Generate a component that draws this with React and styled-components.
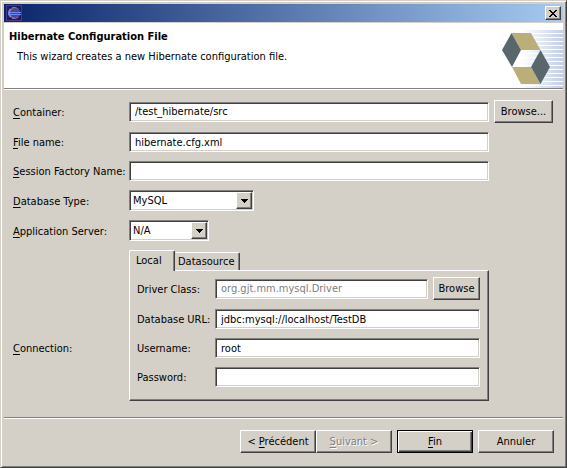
import React, { useState } from 'react';
import styled, { createGlobalStyle, css } from 'styled-components';

const face = '#d4d0c8';
const shade = '#808080';
const dark = '#404040';

const GlobalStyle = createGlobalStyle`
  *, *::before, *::after { box-sizing: border-box; }
  body { margin: 0; background: ${face}; }
  body, button, input, select {
    font-family: "DejaVu Sans Condensed", "DejaVu Sans", sans-serif;
    font-size: 11px;
    line-height: 14px;
    color: #000;
  }
`;

const raised = css`
  border: 1px solid;
  border-color: #fff ${dark} ${dark} #fff;
  box-shadow: inset -1px -1px 0 ${shade};
`;

const sunken = css`
  border: 1px solid;
  border-color: ${shade} #fff #fff ${shade};
  box-shadow: inset 1px 1px 0 ${dark}, inset -1px -1px 0 ${face};
`;

const Window = styled.div`
  display: flex;
  flex-direction: column;
  min-height: 100vh;
  padding: 3px;
  background: ${face};
  border: 1px solid;
  border-color: ${face} ${dark} ${dark} ${face};
  box-shadow: inset 1px 1px 0 #fff, inset -1px -1px 0 ${shade};
`;

const TitleBar = styled.div`
  display: flex;
  align-items: center;
  justify-content: space-between;
  height: 18px;
  padding: 0 2px;
  background: linear-gradient(to right, #0a246a, #a6caf0);
`;

const CloseButton = styled.button`
  ${raised}
  display: grid;
  place-items: center;
  width: 16px;
  height: 14px;
  padding: 0;
  background: ${face};
`;

const Header = styled.header`
  display: flex;
  justify-content: space-between;
  height: 67px;
  margin-top: 1px;
  background: #fff;
  border-bottom: 1px solid #fff;
  box-shadow: inset 0 -1px 0 ${shade};
`;

const HeaderText = styled.div`
  padding: 7px 5px;
`;

const Title = styled.h1`
  margin: 0 0 6px;
  font-size: 11px;
  line-height: 14px;
  font-weight: bold;
`;

const Subtitle = styled.p`
  margin: 0;
  padding-left: 8px;
`;

const Form = styled.form`
  display: flex;
  flex: 1;
  flex-direction: column;
`;

const Fields = styled.div`
  display: grid;
  grid-template-columns: 111px 1fr 59px;
  gap: 9px 5px;
  align-items: center;
  padding: 10px 10px 16px 9px;
`;

const Label = styled.label`
  grid-column: 1;
  padding-top: 2px;
  white-space: nowrap;
`;

const GroupLabel = styled.span`
  grid-column: 1;
  padding-top: 46px;
`;

const Mnemonic = styled.span`
  text-decoration: underline;
  text-underline-offset: 2px;
`;

const TextBox = styled.input`
  ${sunken}
  grid-column: ${(p) => (p.$wide ? 'span 2' : 'auto')};
  width: 100%;
  min-width: 0;
  height: 20px;
  padding: 0 5px;
  background: #fff;
  outline: none;
  &:disabled { color: ${shade}; }
`;

const SelectBox = styled.div`
  ${sunken}
  display: grid;
  align-items: center;
  width: ${(p) => p.$width}px;
  height: 21px;
  padding: 1px;
  background: #fff;
`;

const NativeSelect = styled.select`
  grid-area: 1 / 1;
  width: 100%;
  padding: 0 2px;
  appearance: none;
  background: transparent;
  border: 0;
  outline: none;
`;

const Arrow = styled.span`
  ${raised}
  grid-area: 1 / 1;
  justify-self: end;
  display: grid;
  place-items: center;
  width: 16px;
  height: 17px;
  background: ${face};
  pointer-events: none;
`;

const TabGroup = styled.div`
  min-width: 0;
`;

const TabList = styled.div`
  display: flex;
  align-items: flex-end;
  height: 20px;
`;

const Tab = styled.button`
  height: ${(p) => (p.$active ? 21 : 18)}px;
  margin-bottom: ${(p) => (p.$active ? -1 : 0)}px;
  padding: 0 2px 0 ${(p) => (p.$active ? 6 : 2)}px;
  width: ${(p) => p.$width}px;
  text-align: left;
  background: ${face};
  border: 1px solid;
  border-color: #fff ${dark} transparent ${(p) => (p.$active ? '#fff' : face)};
  border-bottom: 0;
  border-radius: 2px 2px 0 0;
  box-shadow: inset -1px 0 0 ${shade};
`;

const Panel = styled.div`
  ${raised}
  display: grid;
  grid-template-columns: 73px 1fr 47px;
  gap: 9px 5px;
  align-items: center;
  padding: 6px 8px 13px 7px;
`;

const Footer = styled.footer`
  display: flex;
  justify-content: flex-end;
  gap: 5px;
  margin-top: auto;
  padding: 12px 9px 11px;
  border-top: 1px solid ${shade};
  box-shadow: inset 0 1px 0 #fff;
`;

const Pair = styled.div`
  display: flex;
`;

const Button = styled.button`
  ${raised}
  width: ${(p) => (p.$fill ? '100%' : '76px')};
  height: 23px;
  padding: 0;
  white-space: nowrap;
  background: ${face};
  &:disabled { color: ${shade}; text-shadow: 1px 1px 0 #fff; }
`;

const DefaultButton = styled(Button)`
  border-color: #000;
  box-shadow: inset 1px 1px 0 #fff, inset -1px -1px 0 ${dark}, inset -2px -2px 0 ${shade};
`;

function EclipseIcon() {
  return (
    <svg width="16" height="16" viewBox="0 0 16 16" aria-hidden="true">
      <rect width="16" height="16" fill="#4a3a8a" />
      <rect x="1" y="1" width="14" height="14" fill="#23185a" />
      <circle cx="8" cy="8" r="6" fill="#8f89c0" />
      <circle cx="9" cy="8" r="5" fill="#4c4494" />
      <path d="M2 7.500h13M2 9.500h13" stroke="#6f86ea" />
      <path d="M3 13h3M4 3h2" stroke="#120a30" />
    </svg>
  );
}

function CloseIcon() {
  return (
    <svg width="8" height="7" viewBox="0 0 8 7" shapeRendering="crispEdges" aria-hidden="true">
      <path d="M0 0h2v1h1v1h2v-1h1v-1h2v1h-1v1h-1v1h-1v1h1v1h1v1h1v1h-2v-1h-1v-1h-2v1h-1v1h-2v-1h1v-1h1v-1h1v-1h-1v-1h-1v-1h-1z" />
    </svg>
  );
}

function HibernateArt() {
  const stripes = Array.from({ length: 15 }, (_, i) => 7 + i * 4);
  return (
    <svg width="61" height="65" viewBox="0 0 61 65" aria-hidden="true">
      <defs>
        <linearGradient id="haze" gradientUnits="userSpaceOnUse" x1="20" y1="0" x2="61" y2="0">
          <stop offset="0" stopColor="#fff" />
          <stop offset="1" stopColor="#c3cee8" />
        </linearGradient>
      </defs>
      {stripes.map((y) => (
        <rect key={y} x="20" y={y} width="41" height="3" fill="url(#haze)" />
      ))}
      <path d="M9.500 10H29L38.500 27H19zM10 44H29L38.500 61H19z" fill="#bcae79" />
      <path d="M0 27L9.500 10L19 27L10 44zM38.500 27L48 44L38.500 61L29 44z" fill="#59666c" />
    </svg>
  );
}

function Combo({ id, width, value }) {
  return (
    <SelectBox $width={width}>
      <NativeSelect id={id} defaultValue={value}>
        <option>{value}</option>
      </NativeSelect>
      <Arrow>
        <svg width="7" height="4" viewBox="0 0 7 4" shapeRendering="crispEdges" aria-hidden="true">
          <path d="M0 0h7v1h-1v1h-1v1h-1v1h-1v-1h-1v-1h-1v-1h-1z" />
        </svg>
      </Arrow>
    </SelectBox>
  );
}

export default function App() {
  const [tab, setTab] = useState('local');
  return (
    <>
      <GlobalStyle />
      <Window>
        <TitleBar>
          <EclipseIcon />
          <CloseButton type="button" aria-label="Fermer"><CloseIcon /></CloseButton>
        </TitleBar>
        <Header>
          <HeaderText>
            <Title>Hibernate Configuration File</Title>
            <Subtitle>This wizard creates a new Hibernate configuration file.</Subtitle>
          </HeaderText>
          <HibernateArt />
        </Header>
        <Form onSubmit={(e) => e.preventDefault()}>
          <Fields>
            <Label htmlFor="container"><Mnemonic>C</Mnemonic>ontainer:</Label>
            <TextBox id="container" defaultValue="/test_hibernate/src" />
            <Button type="button" $fill>Browse...</Button>

            <Label htmlFor="file"><Mnemonic>F</Mnemonic>ile name:</Label>
            <TextBox id="file" defaultValue="hibernate.cfg.xml" />

            <Label htmlFor="factory"><Mnemonic>S</Mnemonic>ession Factory Name:</Label>
            <TextBox id="factory" />

            <Label htmlFor="dbtype"><Mnemonic>D</Mnemonic>atabase Type:</Label>
            <Combo id="dbtype" width={125} value="MySQL" />

            <Label htmlFor="server"><Mnemonic>A</Mnemonic>pplication Server:</Label>
            <Combo id="server" width={80} value="N/A" />

            <GroupLabel id="connection"><Mnemonic>C</Mnemonic>onnection:</GroupLabel>
            <TabGroup role="group" aria-labelledby="connection">
              <TabList role="tablist">
                <Tab type="button" role="tab" aria-selected={tab === 'local'} $active={tab === 'local'} $width={46} onClick={() => setTab('local')}>Local</Tab>
                <Tab type="button" role="tab" aria-selected={tab === 'source'} $active={tab === 'source'} $width={65} onClick={() => setTab('source')}>Datasource</Tab>
              </TabList>
              <Panel role="tabpanel">
                <Label htmlFor="driver">Driver Class:</Label>
                <TextBox id="driver" defaultValue="org.gjt.mm.mysql.Driver" disabled />
                <Button type="button" $fill>Browse</Button>

                <Label htmlFor="url">Database URL:</Label>
                <TextBox id="url" $wide defaultValue="jdbc:mysql://localhost/TestDB" />

                <Label htmlFor="user">Username:</Label>
                <TextBox id="user" $wide defaultValue="root" />

                <Label htmlFor="password">Password:</Label>
                <TextBox id="password" type="password" $wide />
              </Panel>
            </TabGroup>
          </Fields>
          <Footer>
            <Pair>
              <Button type="button">&lt; <Mnemonic>P</Mnemonic>récédent</Button>
              <Button type="button" disabled><Mnemonic>S</Mnemonic>uivant &gt;</Button>
            </Pair>
            <DefaultButton type="submit"><Mnemonic>F</Mnemonic>in</DefaultButton>
            <Button type="button">Annuler</Button>
          </Footer>
        </Form>
      </Window>
    </>
  );
}
